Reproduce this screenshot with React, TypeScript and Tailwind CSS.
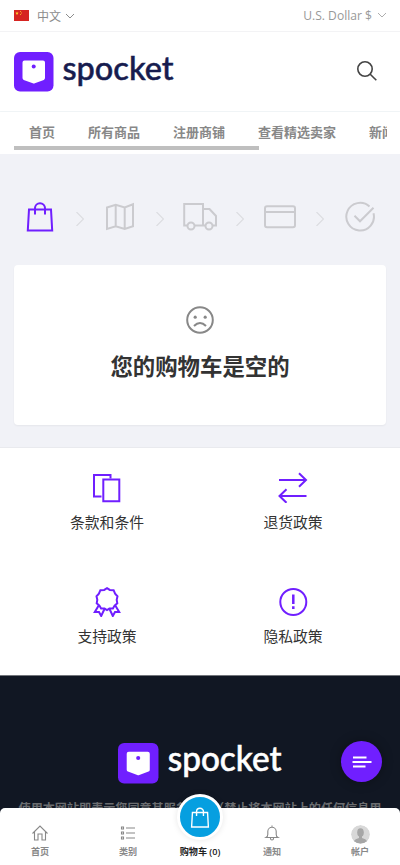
import type { ReactNode } from 'react';

type IconProps = { className?: string; children: ReactNode; box?: string; width?: number };

function Icon({ className, children, box = '0 0 32 32', width = 2 }: IconProps) {
  return (
    <svg viewBox={box} className={className} fill="none" stroke="currentColor" strokeWidth={width}>
      {children}
    </svg>
  );
}

function Logo({ className, light }: { className: string; light?: boolean }) {
  return (
    <svg viewBox="0 0 160 40" className={`overflow-visible ${className}`}>
      <rect width="39.5" height="39.5" rx="6" fill="#701fff" />
      <path
        d="M10.5 8.5h18.5q2 0 2 2v15.5q0 1.3-1.2 1.9L20.8 31.3q-1 .5-2 0L9.7 27.9q-1.2-.6-1.2-1.9V10.5q0-2 2-2z"
        fill="#fff"
      />
      <circle cx="19.7" cy="14.6" r="2" fill="#701fff" />
      <text
        x="48.5"
        y="27.6"
        textLength="111"
        lengthAdjust="spacingAndGlyphs"
        className="font-['Lato',sans-serif] text-[33px] font-medium"
        fill={light ? '#fff' : '#171c4f'}
        stroke={light ? '#fff' : '#171c4f'}
        strokeWidth="0.5"
      >
        spocket
      </text>
    </svg>
  );
}

const links = ['首页', '所有商品', '注册商铺', '查看精选卖家', '新闻'];

const bag = <path d="M5 9.5h22l1.200 21H3.800z M11 14.500V8a5 4.800 0 0 1 10 0v6.500" />;

const steps = [
  { name: 'cart', icon: bag },
  {
    name: 'address',
    icon: <path d="M3 7.500l8.700-2.800 9 2.800 8.300-3.200v22l-8.300 2.700-9-2.700L3 29z M11.700 4.700v21.600 M20.700 7.500V29" />,
  },
  {
    name: 'delivery',
    wide: true,
    icon: (
      <>
        <path d="M4 25.500H1.200V4H20v21.500h-8.500 M20 9h6.500l6.500 7v9.500h-3 M20 25.500h2.500" />
        <circle cx="8" cy="26" r="3.500" />
        <circle cx="26" cy="26" r="3.500" />
      </>
    ),
  },
  {
    name: 'payment',
    wide: true,
    icon: (
      <>
        <rect x="2" y="6.200" width="30" height="21" rx="2" />
        <path d="M2 12h30" />
      </>
    ),
  },
  {
    name: 'done',
    icon: <path d="M29.500 13.200A13.800 13.800 0 1 1 25.500 6.500 M10.500 15.800l5.500 5.500L29.500 7.800" />,
  },
];

const policies = [
  {
    label: '条款和条件',
    icon: (
      <>
        <path d="M10.500 25.500H3V4h16.500v3.500" />
        <path d="M12.300 8.500h16v21.800h-16z" />
      </>
    ),
  },
  {
    label: '退货政策',
    icon: <path d="M2 9h27.500 M22 2.200l7 6.800-7 6.800 M29.500 25H2 M9.500 18.200l-7 6.800 7 6.800" />,
  },
  {
    label: '支持政策',
    icon: (
      <>
        <path d="M16 3.200l2.800 1.700 3.800.3 1.500 3.400 2.400 2.700-.8 3.500.6 3.500-2.700 2.300-1.700 3-3.500 0L16 25l-2.400-1.400-3.500 0-1.700-3-2.700-2.300.6-3.500-.8-3.500 2.400-2.700 1.500-3.400 3.800-.3z" />
        <path d="M7.700 20.500L3.800 27h4.200L10.200 31l3.500-7.500 M24.300 20.500l3.900 6.500h-4.200L21.800 31l-3.500-7.500" />
      </>
    ),
  },
  {
    label: '隐私政策',
    icon: (
      <>
        <circle cx="16.300" cy="17" r="13" />
        <path d="M16.300 9.500v9.500 M16.300 21.300v2.600" strokeWidth="2.500" />
      </>
    ),
  },
];

export default function App() {
  return (
    <div className="relative flex h-[865px] w-[400px] flex-col overflow-hidden bg-white font-['Open_Sans','Noto_Sans_CJK_SC',sans-serif] text-[#333]">
      {/* Top bar */}
      <div className="flex h-8 shrink-0 items-center justify-between border-b border-[#f3f3f5] px-3.5 text-xs text-[#8c8c8c]">
        <div className="flex items-center">
          <svg viewBox="0 0 15 11" className="mr-2 h-[11px] w-[15px]">
            <rect width="15" height="11" fill="#d62421" />
            <path d="M3 1.500l.5 1.200h1.200l-1 .8.400 1.200L3 4l-1.100.7.400-1.200-1-.8h1.200z" fill="#ffda2c" />
            <path d="M6 1h1v1H6z M7 2.500h1v1H7z M6 4h1v1H6z" fill="#f6a723" />
          </svg>
          <span className="pt-0.5">中文</span>
          <Icon className="ml-[5px] h-2 w-2" box="0 0 8 8" width={1}>
            <path d="M0 2l4 4 4-4" />
          </Icon>
        </div>
        <div className="flex items-center text-[12.1px] text-[#999]">
          <span className="pt-0.5">U.S. Dollar $</span>
          <Icon className="ml-1.5 h-2 w-2" box="0 0 8 8" width={0.8}>
            <path d="M0 2l4 4 4-4" />
          </Icon>
        </div>
      </div>

      {/* Header */}
      <header className="flex h-20 shrink-0 items-center justify-between border-b border-[#f1f5f7] px-3.5">
        <Logo className="h-10 w-40" />
        <Icon className="mr-[9px] mb-0.5 h-5 w-5 text-[#444]" box="0 0 20 20" width={1.6}>
          <circle cx="8" cy="8" r="7.200" />
          <path d="M13 13l6.300 6.300" />
        </Icon>
      </header>

      {/* Menu */}
      <nav className="h-[42px] shrink-0 px-3.5 shadow-[0_1px_2px_rgba(0,0,0,0.06)]">
        <div className="-mr-px flex h-[34px] gap-[33px] overflow-hidden pt-2.5 pl-[15px] text-[13px] leading-5 font-bold whitespace-nowrap text-[#888]">
          {links.map((link) => (
            <a key={link} className="shrink-0">
              {link}
            </a>
          ))}
        </div>
        <div className="h-1 w-[245px] bg-[#bfbfbf]" />
      </nav>

      {/* Cart */}
      <main className="h-[294px] shrink-0 border-b border-[#e9eaee] bg-[#f1f2f7] px-3.5">
        <div className="-mx-3.5 grid grid-cols-5 pt-[46px]">
          {steps.map((step, i) => (
            <div key={step.name} className="relative flex h-[65px] justify-center">
              <Icon
                className={`h-8 ${step.wide ? 'w-[34px]' : 'w-8'} ${i === 0 ? 'text-[#701fff]' : 'text-[#cbcbcf]'}`}
                box={step.wide ? '0 0 34 32' : '0 0 32 32'}
              >
                {step.icon}
              </Icon>
              {i < steps.length - 1 && (
                <Icon className="absolute top-3 -right-1 h-3.5 w-2 text-[#dcdde1]" box="0 0 8 14" width={1.2}>
                  <path d="M.5 0l7 7-7 7" />
                </Icon>
              )}
            </div>
          ))}
        </div>
        <section className="flex h-40 flex-col items-center rounded bg-white pt-10 shadow-[0_1px_2px_rgba(0,0,0,0.05)]">
          <Icon className="h-[30px] w-[30px] text-[#888]" box="0 0 30 30">
            <circle cx="15" cy="15" r="12.800" />
            <path d="M9 21q6-6 12 0" />
            <circle cx="10.200" cy="12.200" r="1.600" fill="currentColor" stroke="none" />
            <circle cx="20.200" cy="12.200" r="1.600" fill="currentColor" stroke="none" />
          </Icon>
          <h3 className="mt-4 text-[22.4px] leading-8 font-bold">您的购物车是空的</h3>
        </section>
      </main>

      {/* Policies */}
      <section className="grid h-[227px] shrink-0 grid-cols-2 px-3.5">
        {policies.map((policy) => (
          <a key={policy.label} className="flex flex-col items-center pt-[23px] text-[14.8px] leading-6">
            <Icon className="h-8 w-8 text-[#701fff]">{policy.icon}</Icon>
            <span className="mt-[7px]">{policy.label}</span>
          </a>
        ))}
      </section>

      {/* Footer */}
      <footer className="flex h-[190px] shrink-0 flex-col items-center border-t border-[#72757b] bg-[#111723] pt-[67px]">
        <Logo className="h-[41px] w-[164px]" light />
        <p className="mt-4 text-[12.1px] leading-[18px] font-bold whitespace-nowrap text-[#6b6d70]">
          使用本网站即表示您同意其服务条款（禁止将本网站上的任何信息用
        </p>
      </footer>

      {/* Seller menu button */}
      <button className="absolute top-[741px] right-[18px] flex h-[41px] w-[41px] items-center justify-center rounded-full bg-[#701fff] text-white shadow-[0_0_12px_rgba(0,0,0,0.3)]">
        <Icon className="h-3.5 w-5" box="0 0 20 14">
          <path d="M1 2.500h13.500 M.5 7h19 M1 11.500h12.500" />
        </Icon>
      </button>

      {/* Bottom navigation */}
      <div className="absolute inset-x-0 bottom-0 flex h-[57px] rounded-t-[5px] bg-white text-center text-[9.1px] leading-3 font-semibold text-[#888]">
        <a className="flex w-20 flex-col items-center pt-[17px]">
          <Icon className="h-4 w-4" box="0 0 16 16" width={1.1}>
            <path d="M.5 8.500L8 1l7.500 7.500 M2.500 6.500v8.500h3.500V9h4v6h3.500V6.500" />
          </Icon>
          <span className="mt-[5px]">首页</span>
        </a>
        <a className="flex w-24 flex-col items-center pt-[17px]">
          <Icon className="h-4 w-4" box="0 0 16 16" width={1.1}>
            <path d="M1.500 2h2v2h-2z M1.500 7h2v2h-2z M1.500 12h2v2h-2z M6 3h9 M6 8h9 M6 13h9" />
          </Icon>
          <span className="mt-[5px]">类别</span>
        </a>
        <a className="relative flex w-12 flex-col items-center text-[#222]">
          <span className="absolute -top-[14px] flex h-[46px] w-[46px] items-center justify-center rounded-full border-[3px] border-white bg-[#069fe0] text-white shadow-[0_0_6px_rgba(0,0,0,0.1)]">
            <Icon className="h-[22px] w-[22px]">{bag}</Icon>
          </span>
          <span className="mt-[38px] whitespace-nowrap">购物车 (0)</span>
        </a>
        <a className="flex w-24 flex-col items-center pt-[17px]">
          <Icon className="h-4 w-4" box="0 0 16 16" width={1.1}>
            <path d="M2 12.500h12q-1.800-1-1.800-3V6.500a4.200 4.200 0 0 0-8.400 0v3q0 2-1.800 3z M8 .5v2 M6.500 12.500v1a1.500 1.500 0 0 0 3 0v-1" />
          </Icon>
          <span className="mt-[5px]">通知</span>
        </a>
        <a className="flex w-20 flex-col items-center pt-[17px]">
          <svg viewBox="0 0 19 19" className="h-[19px] w-[19px] rounded-full">
            <circle cx="9.500" cy="9.500" r="9.500" fill="#d8d8d8" />
            <ellipse cx="9.500" cy="7.500" rx="3.300" ry="4.300" fill="#a6a6a6" />
            <path d="M8 10h3v3q4 1 5 3a9.500 9.500 0 0 1-13 0q1-2 5-3z" fill="#a6a6a6" />
          </svg>
          <span className="mt-[2px]">帐户</span>
        </a>
      </div>
    </div>
  );
}
